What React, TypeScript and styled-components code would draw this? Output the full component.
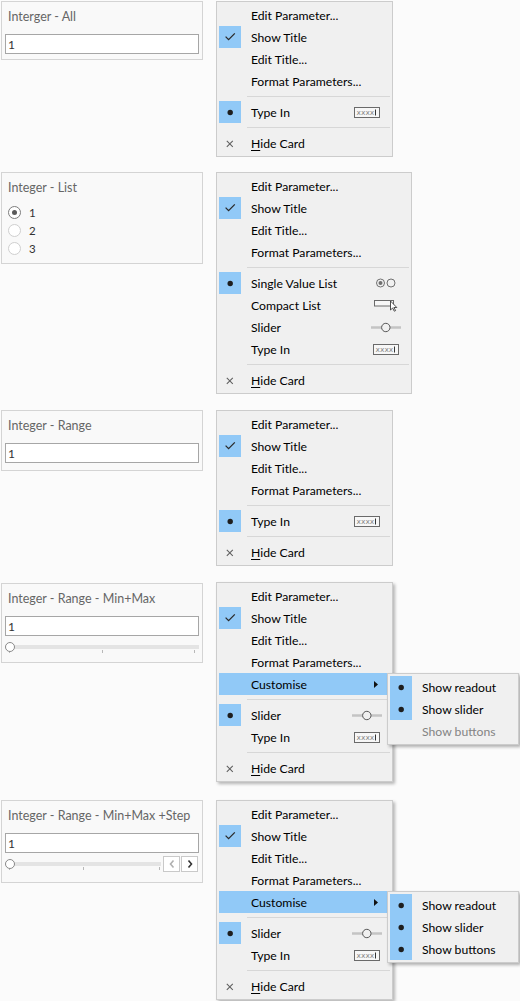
import React from "react";
import styled, { createGlobalStyle } from "styled-components";

const Global = createGlobalStyle`
  html, body { margin: 0; padding: 0; background: #fbfbfb; }
  body { width: 520px; height: 1001px; overflow: hidden; }
  * { box-sizing: border-box; }
`;

const Page = styled.div`
  display: flex;
  flex-direction: column;
  padding-left: 1px;
`;

const Section = styled.div<{ $mt: number }>`
  display: flex;
  align-items: flex-start;
  margin-top: ${(p) => p.$mt}px;
`;

/* ---------- parameter cards ---------- */

const Card = styled.div<{ $h: number; $mt?: number }>`
  width: 202px;
  height: ${(p) => p.$h}px;
  margin-top: ${(p) => p.$mt ?? 0}px;
  background: #f9f9f9;
  border: 1px solid #d4d4d4;
  display: flex;
  flex-direction: column;
  font-family: Lato, "Open Sans", sans-serif;
`;

const CardTitle = styled.div`
  padding: 6px 6px 9px;
  line-height: 17px;
  font-size: 12.5px;
  color: #666666;
  white-space: nowrap;
`;

const TextField = styled.div`
  margin: 0 3px;
  height: 20px;
  border: 1px solid #a6a6a6;
  background: #ffffff;
  padding-left: 2px;
  display: flex;
  align-items: center;
  font-size: 12px;
  color: #333333;
`;

const RadioList = styled.div`
  display: flex;
  flex-direction: column;
  margin-top: -2px;
  padding-left: 6px;
`;

const RadioRow = styled.div`
  height: 18px;
  display: flex;
  align-items: center;
  gap: 8px;
  font-size: 11.5px;
  color: #333333;
`;

const RadioCircle = styled.span<{ $on?: boolean }>`
  width: 13px;
  height: 13px;
  border-radius: 50%;
  background: #ffffff;
  border: 1px solid ${(p) => (p.$on ? "#7d7d7d" : "#cfcfcf")};
  display: flex;
  align-items: center;
  justify-content: center;
  &::after {
    content: "";
    width: 5px;
    height: 5px;
    border-radius: 50%;
    background: ${(p) => (p.$on ? "#5a5a5a" : "transparent")};
  }
`;

const SliderRow = styled.div<{ $pr: number }>`
  display: flex;
  align-items: flex-start;
  padding: 0 ${(p) => p.$pr}px 0 3px;
  gap: 2px;
`;

const Track = styled.div`
  position: relative;
  flex: 1;
  height: 21px;
`;

const TrackBar = styled.div`
  margin-top: 9px;
  height: 4px;
  background: #e4e4e4;
`;

const Thumb = styled.span`
  position: absolute;
  left: 0;
  top: 6px;
  width: 10px;
  height: 10px;
  border-radius: 50%;
  background: #ffffff;
  border: 1px solid #8a8a8a;
`;

const Tick = styled.span`
  position: absolute;
  top: 14px;
  width: 1px;
  height: 3px;
  background: #b8b8b8;
`;

const StepButtons = styled.div`
  display: flex;
  gap: 1px;
  margin-top: 3px;
`;

const StepButton = styled.span`
  width: 17px;
  height: 16px;
  border: 1px solid #c9c9c9;
  background: #ffffff;
  display: flex;
  align-items: center;
  justify-content: center;
`;

/* ---------- context menus ---------- */

const MenuBox = styled.div<{ $w: number; $shadow?: boolean }>`
  position: relative;
  width: ${(p) => p.$w}px;
  margin-left: 13px;
  padding: 2px;
  background: #f0f0f0;
  border: 1px solid #cccccc;
  box-shadow: ${(p) => (p.$shadow ? "2px 2px 3px rgba(0,0,0,0.28)" : "none")};
  font-family: Lato, "Segoe UI", "Noto Sans", sans-serif;
  font-size: 12.2px;
  color: #000000;
  display: flex;
  flex-direction: column;
`;

const SubMenuBox = styled.div`
  position: absolute;
  left: 168px;
  top: 0;
  z-index: 2;
  width: 132px;
  padding: 2px;
  background: #f0f0f0;
  border: 1px solid #cccccc;
  box-shadow: 2px 2px 3px rgba(0,0,0,0.3);
  display: flex;
  flex-direction: column;
`;

const Row = styled.div<{ $hl?: boolean; $disabled?: boolean }>`
  position: relative;
  height: 22px;
  display: flex;
  align-items: center;
  background: ${(p) => (p.$hl ? "#91c9f7" : "transparent")};
  color: ${(p) => (p.$disabled ? "#838383" : "#000000")};
  white-space: nowrap;
`;

const MarkBox = styled.span<{ $on?: boolean }>`
  width: 22px;
  height: 22px;
  flex: none;
  background: ${(p) => (p.$on ? "#91c9f7" : "transparent")};
  display: flex;
`;

const Label = styled.span`
  flex: 1;
  margin-left: 10px;
`;

const Mnemonic = styled.span`
  text-decoration: underline;
  text-underline-offset: 2px;
`;

const RightSlot = styled.span<{ $arrow?: boolean }>`
  width: 32px;
  margin-right: 7px;
  flex: none;
  display: flex;
  align-items: center;
  justify-content: ${(p) => (p.$arrow ? "flex-end" : "center")};
  padding-right: ${(p) => (p.$arrow ? 5 : 0)}px;
`;

const Separator = styled.div`
  height: 9px;
  padding: 4px 0 4px 28px;
  &::after {
    content: "";
    display: block;
    height: 1px;
    background: #d7d7d7;
  }
`;

/* ---------- icons ---------- */

const CheckIcon = () => (
  <svg width="22" height="22" viewBox="0 0 22 22">
    <path d="M6.6 10.6 L9.6 13.6 L15.8 7.4" fill="none" stroke="#2a2a2a" strokeWidth="1.3" />
  </svg>
);

const DotIcon = () => (
  <svg width="22" height="22" viewBox="0 0 22 22">
    <circle cx="11.2" cy="11.5" r="2.7" fill="#1e1e1e" />
  </svg>
);

const CrossIcon = () => (
  <svg width="22" height="22" viewBox="0 0 22 22">
    <path d="M7.8 8.8 L13.8 14.8 M13.8 8.8 L7.8 14.8" stroke="#5f5f5f" strokeWidth="1.05" fill="none" />
  </svg>
);

const TypeInIcon = () => (
  <svg width="26" height="11" viewBox="0 0 26 11">
    <rect x="0.5" y="0.5" width="25" height="10" fill="#f7f7f7" stroke="#6a6a6a" />
    <text x="2.5" y="8" fontSize="7.5" fill="#8a8a8a" fontFamily="DejaVu Sans, sans-serif">xxxx</text>
    <path d="M21.5 2.5 V8.5" stroke="#333" strokeWidth="1" />
  </svg>
);

const RadioPairIcon = () => (
  <svg width="20" height="10" viewBox="0 0 20 10">
    <circle cx="4.5" cy="5" r="4" fill="none" stroke="#707070" />
    <circle cx="4.5" cy="5" r="2" fill="#707070" />
    <circle cx="15" cy="5" r="4" fill="none" stroke="#707070" />
  </svg>
);

const CompactListIcon = () => (
  <svg width="25" height="13" viewBox="0 0 25 13">
    <rect x="0.5" y="1.5" width="19" height="5.5" fill="#f7f7f7" stroke="#6a6a6a" />
    <path
      d="M16.5 2 L16.5 11 L18.6 9 L20.3 12.2 L21.6 11.6 L19.9 8.5 L22.8 8.5 Z"
      fill="#ffffff"
      stroke="#3c3c3c"
      strokeWidth="0.9"
      strokeLinejoin="round"
    />
  </svg>
);

const SliderIcon = () => (
  <svg width="30" height="11" viewBox="0 0 30 11">
    <path d="M0 5.5 H30" stroke="#c4c4c4" strokeWidth="2.5" />
    <circle cx="14.8" cy="5.5" r="4.2" fill="#f0f0f0" stroke="#555555" strokeWidth="1" />
  </svg>
);

const ArrowIcon = () => (
  <svg width="4" height="7" viewBox="0 0 4 7">
    <path d="M0 0 L4 3.5 L0 7 Z" fill="#111111" />
  </svg>
);

const ChevronIcon = ({ dir, color }: { dir: "l" | "r"; color: string }) => (
  <svg width="8" height="10" viewBox="0 0 8 10">
    <path
      d={dir === "l" ? "M5.5 1.5 L2.5 5 L5.5 8.5" : "M2.5 1.5 L5.5 5 L2.5 8.5"}
      fill="none"
      stroke={color}
      strokeWidth="1.6"
    />
  </svg>
);

/* ---------- data ---------- */

type Mark = "check" | "dot" | "x" | undefined;
type SubItem = { label: string; on?: boolean; disabled?: boolean };
type Entry =
  | { sep: true }
  | {
      sep?: false;
      label: string;
      mark?: Mark;
      right?: React.ReactNode;
      mnemonic?: boolean;
      hl?: boolean;
      sub?: SubItem[];
    };

const markIcon = (m: Mark) =>
  m === "check" ? <CheckIcon /> : m === "dot" ? <DotIcon /> : m === "x" ? <CrossIcon /> : null;

const head: Entry[] = [
  { label: "Edit Parameter..." },
  { label: "Show Title", mark: "check" },
  { label: "Edit Title..." },
  { label: "Format Parameters..." },
];

const hide: Entry[] = [{ sep: true }, { label: "Hide Card", mark: "x", mnemonic: true }];

const menuTypeIn: Entry[] = [
  ...head,
  { sep: true },
  { label: "Type In", mark: "dot", right: <TypeInIcon /> },
  ...hide,
];

const menuList: Entry[] = [
  ...head,
  { sep: true },
  { label: "Single Value List", mark: "dot", right: <RadioPairIcon /> },
  { label: "Compact List", right: <CompactListIcon /> },
  { label: "Slider", right: <SliderIcon /> },
  { label: "Type In", right: <TypeInIcon /> },
  ...hide,
];

const menuSlider = (sub: SubItem[]): Entry[] => [
  ...head,
  { label: "Customise", hl: true, sub },
  { sep: true },
  { label: "Slider", mark: "dot", right: <SliderIcon /> },
  { label: "Type In", right: <TypeInIcon /> },
  ...hide,
];

const Menu = ({ entries, width, shadow }: { entries: Entry[]; width: number; shadow?: boolean }) => (
  <MenuBox $w={width} $shadow={shadow}>
    {entries.map((e, i) =>
      e.sep ? (
        <Separator key={i} />
      ) : (
        <Row key={i} $hl={e.hl}>
          <MarkBox $on={e.mark === "check" || e.mark === "dot"}>{markIcon(e.mark)}</MarkBox>
          <Label>
            {e.mnemonic ? (
              <>
                <Mnemonic>{e.label[0]}</Mnemonic>
                {e.label.slice(1)}
              </>
            ) : (
              e.label
            )}
          </Label>
          {e.sub ? (
            <RightSlot $arrow>
              <ArrowIcon />
            </RightSlot>
          ) : (
            <RightSlot>{e.right}</RightSlot>
          )}
          {e.sub && (
            <SubMenuBox>
              {e.sub.map((s, j) => (
                <Row key={j} $disabled={s.disabled}>
                  <MarkBox $on={s.on}>{s.on ? <DotIcon /> : null}</MarkBox>
                  <Label>{s.label}</Label>
                </Row>
              ))}
            </SubMenuBox>
          )}
        </Row>
      )
    )}
  </MenuBox>
);

const Slider = ({ ticks, buttons }: { ticks: string[]; buttons?: boolean }) => (
  <SliderRow $pr={buttons ? 4 : 3}>
    <Track>
      <TrackBar />
      {ticks.map((t, i) => (
        <Tick key={i} style={{ left: t }} />
      ))}
      <Thumb />
    </Track>
    {buttons && (
      <StepButtons>
        <StepButton>
          <ChevronIcon dir="l" color="#b0b0b0" />
        </StepButton>
        <StepButton>
          <ChevronIcon dir="r" color="#333333" />
        </StepButton>
      </StepButtons>
    )}
  </SliderRow>
);

export default function App() {
  return (
    <>
      <Global />
      <Page>
        <Section $mt={1}>
          <Card $h={59}>
            <CardTitle>Interger - All</CardTitle>
            <TextField>1</TextField>
          </Card>
          <Menu entries={menuTypeIn} width={177} />
        </Section>

        <Section $mt={15}>
          <Card $h={92}>
            <CardTitle>Integer - List</CardTitle>
            <RadioList>
              <RadioRow>
                <RadioCircle $on />1
              </RadioRow>
              <RadioRow>
                <RadioCircle />2
              </RadioRow>
              <RadioRow>
                <RadioCircle />3
              </RadioRow>
            </RadioList>
          </Card>
          <Menu entries={menuList} width={196} />
        </Section>

        <Section $mt={16}>
          <Card $h={61}>
            <CardTitle>Integer - Range</CardTitle>
            <TextField>1</TextField>
          </Card>
          <Menu entries={menuTypeIn} width={177} />
        </Section>

        <Section $mt={16}>
          <Card $h={80} $mt={1}>
            <CardTitle>Integer - Range - Min+Max</CardTitle>
            <TextField>1</TextField>
            <Slider ticks={["4px", "50%", "calc(100% - 5px)"]} />
          </Card>
          <Menu
            entries={menuSlider([
              { label: "Show readout", on: true },
              { label: "Show slider", on: true },
              { label: "Show buttons", disabled: true },
            ])}
            width={177}
            shadow
          />
        </Section>

        <Section $mt={18}>
          <Card $h={83}>
            <CardTitle>Integer - Range - Min+Max +Step</CardTitle>
            <TextField>1</TextField>
            <Slider ticks={["4px", "50%", "calc(100% - 2px)"]} buttons />
          </Card>
          <Menu
            entries={menuSlider([
              { label: "Show readout", on: true },
              { label: "Show slider", on: true },
              { label: "Show buttons", on: true },
            ])}
            width={177}
            shadow
          />
        </Section>
      </Page>
    </>
  );
}
